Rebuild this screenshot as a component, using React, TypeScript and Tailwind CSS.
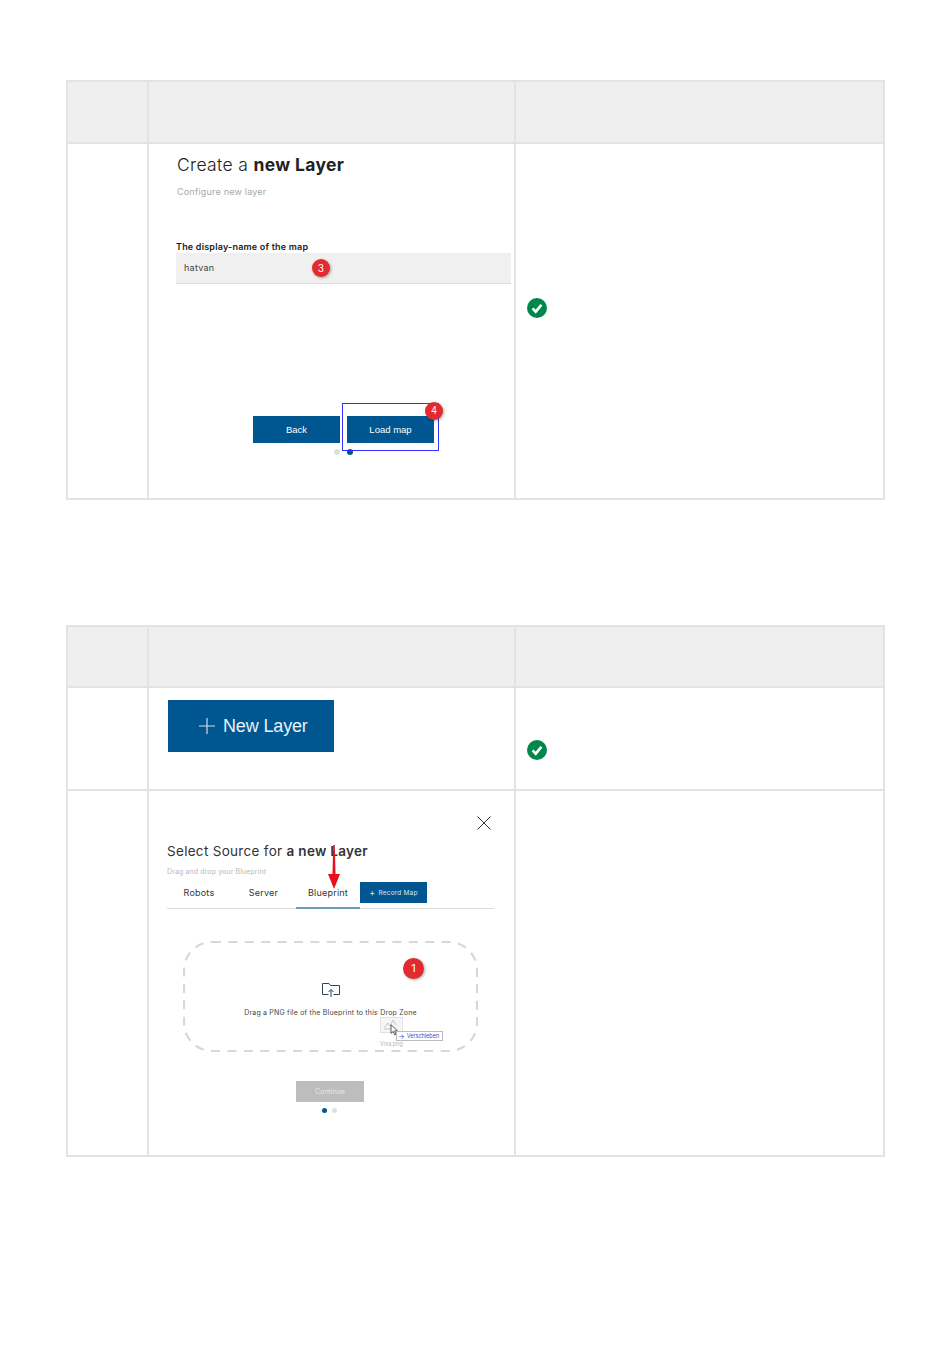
const LINE = "border-[#e3e3e3]";

function CheckBadge() {
  return (
    <svg width="20" height="20" viewBox="0 0 20 20" className="block">
      <circle cx="10" cy="10" r="10" fill="#00884a" />
      <path d="M5.6 10.4l3.1 3.3L14.4 6.8" fill="none" stroke="#fff" strokeWidth="2.6" />
    </svg>
  );
}

function NumberBadge({ n, className }: { n: number; className: string }) {
  return (
    <div className={`absolute flex h-[18px] w-[18px] items-center justify-center rounded-full bg-[#e32b2f] text-[10px] leading-none text-white shadow-[1px_1px_3px_rgba(0,0,0,0.35)] ${className}`}>
      {n}
    </div>
  );
}

function HeaderRow({ height }: { height: string }) {
  return (
    <>
      <div className={`bg-[#efefef] ${height}`} />
      <div className={`border-l-2 ${LINE} bg-[#efefef] ${height}`} />
      <div className={`border-l-2 ${LINE} bg-[#efefef] ${height}`} />
    </>
  );
}

function CreateLayerRow() {
  return (
    <>
      <div className={`h-[356px] border-t-2 ${LINE}`} />
      <div className={`h-[356px] border-t-2 border-l-2 ${LINE} pt-[10px] pl-[27px] pr-[3px]`}>
        <h2 className="pl-[1px] text-[17.5px] leading-[22px] font-light tracking-[0.35px] text-[#222]">
          Create a <span className="font-bold">new Layer</span>
        </h2>
        <p className="mt-[10px] pl-[1px] text-[9px] leading-[12px] tracking-[0.2px] text-[#a8a8a8]">Configure new layer</p>
        <p className="mt-[43px] text-[9px] leading-[12px] font-semibold tracking-[0.2px] text-[#222]">The display-name of the map</p>
        <div className="relative flex h-[31px] items-center border-b border-[#dcdcdc] bg-[#f0f0f0] pl-[8px] text-[9px] tracking-[0.25px] text-[#444]">
          hatvan
          <NumberBadge n={3} className="left-[136px] top-[6px]" />
        </div>
        <div className="relative mt-[132px] ml-[77px] flex gap-[7px] font-['Liberation_Sans',sans-serif] text-[9.5px] text-white">
          <div className="flex h-[27px] w-[87px] items-center justify-center bg-[#005691] pt-[1px]">Back</div>
          <div className="flex h-[27px] w-[87px] items-center justify-center bg-[#005691] pt-[1px]">Load map</div>
          <div className="absolute left-[89px] top-[-13px] h-[48px] w-[97px] border border-[#3232ff]" />
          <NumberBadge n={4} className="left-[172px] top-[-14px]" />
        </div>
        <div className="mt-[6px] ml-[158px] flex gap-[7px]">
          <div className="h-[6px] w-[6px] rounded-full bg-[#dfdfdf]" />
          <div className="h-[6px] w-[6px] rounded-full bg-[#005691]" />
        </div>
      </div>
      <div className={`h-[356px] border-t-2 border-l-2 ${LINE} pt-[154px] pl-[11px]`}>
        <CheckBadge />
      </div>
    </>
  );
}

function NewLayerRow() {
  return (
    <>
      <div className={`h-[103px] border-t-2 ${LINE}`} />
      <div className={`h-[103px] border-t-2 border-l-2 ${LINE} pt-[12px] pl-[19px]`}>
        <div className="flex h-[52px] w-[166px] items-center bg-[#005691] pl-[31px] font-['Liberation_Sans',sans-serif] text-[18px] tracking-[-0.15px] text-[#e8f2fa]">
          <svg width="16" height="16" viewBox="0 0 16 16" className="mr-[8px]">
            <path d="M8 0v16M0 8h16" stroke="#cfdde8" strokeWidth="1.2" />
          </svg>
          New Layer
        </div>
      </div>
      <div className={`h-[103px] border-t-2 border-l-2 ${LINE} pt-[52px] pl-[11px]`}>
        <CheckBadge />
      </div>
    </>
  );
}

function DropZone() {
  return (
    <div className="relative mt-[32px] ml-[16px] flex h-[111px] w-[295px] flex-col items-center pt-[42px]">
      <svg width="295" height="111" viewBox="0 0 295 111" className="absolute left-0 top-0">
        <rect x="1" y="1" width="293" height="109" rx="28" fill="none" stroke="#d8d8d8" strokeWidth="2.2" strokeDasharray="9 7.4" />
      </svg>
      <svg width="18" height="14" viewBox="0 0 18 14" className="block">
        <path d="M6.5 11.5H.5V.5H7l1.5 2h9v9h-6" fill="none" stroke="#32465a" strokeWidth="1" />
        <path d="M9 14V6.5M6.5 9L9 6.5 11.5 9" fill="none" stroke="#32465a" strokeWidth="1" />
      </svg>
      <p className="mt-[11px] text-[7px] leading-[10px] tracking-[0.2px] text-[#444]">Drag a PNG file of the Blueprint to this Drop Zone</p>
      <NumberBadge n={1} className="left-[220px] top-[17px] h-[21px]! w-[21px]! text-[11px]!" />
      <div className="absolute left-[197px] top-[76px] flex h-[16px] w-[23px] items-start justify-center border border-[#e2e2e2] bg-[#f6f6f6]">
        <svg width="17" height="12" viewBox="0 0 17 12">
          <path d="M1 10l4-5 2 3 3-6 3 5M1 11h9" fill="none" stroke="#b8b8b8" strokeWidth="0.8" />
        </svg>
      </div>
      <svg width="9" height="12" viewBox="0 0 9 12" className="absolute left-[207px] top-[83px]">
        <path d="M1 .8v8.6l2.2-2 1.5 3.4 1.4-.6-1.5-3.3h3z" fill="#fff" stroke="#333" strokeWidth="0.8" />
      </svg>
      <div className="absolute left-[213px] top-[90px] flex h-[10px] w-[47px] items-center border border-[#bbbbbb] bg-white pl-[1px] text-[5.5px] text-[#3b4fd0]">
        <span className="mr-[2px] text-[7px] leading-none">→</span>Verschieben
      </div>
      <span className="absolute left-[197px] top-[100px] text-[5.5px] leading-[7px] text-[#b5b5b5]">Vixa.png</span>
    </div>
  );
}

function SelectSourceRow() {
  return (
    <>
      <div className={`h-[366px] border-t-2 ${LINE}`} />
      <div className={`h-[366px] border-t-2 border-l-2 ${LINE} pt-[25px] pl-[18px]`}>
        <div className="relative w-[327px]">
          <div className="flex justify-end pr-[3px]">
            <svg width="14" height="14" viewBox="0 0 14 14" className="block">
              <path d="M.5.5l13 13M13.5.5l-13 13" stroke="#333" strokeWidth="1" />
            </svg>
          </div>
          <h3 className="mt-[12px] text-[13.5px] leading-[18px] tracking-[0.3px] text-[#333]">
            Select Source for <span className="font-semibold">a new Layer</span>
          </h3>
          <p className="mt-[7px] text-[7px] leading-[10px] tracking-[0.12px] text-[#b8b8b8]">Drag and drop your Blueprint</p>
          <div className="mt-[5px] flex h-[27px] border-b border-[#dcdcdc] text-[9px] leading-[12px] tracking-[0.2px] text-[#333]">
            <div className="h-[27px] w-[64px] pt-[5px] text-center">Robots</div>
            <div className="h-[27px] w-[65px] pt-[5px] text-center">Server</div>
            <div className="h-[27px] w-[64px] border-b-2 border-[#6b9cbf] pt-[5px] text-center">Blueprint</div>
            <div className="flex h-[21px] w-[67px] items-center justify-center bg-[#005691] text-[6.5px] text-[#dbe8f2]">
              <span className="mr-[3px] text-[9px] leading-none">+</span>Record Map
            </div>
          </div>
          <svg width="14" height="45" viewBox="0 0 14 45" className="absolute left-[160px] top-[29px]">
            <path d="M6.2 0h1.6l.8 32H5.4z" fill="#e8101a" />
            <path d="M1 29h12L7 44z" fill="#e8101a" />
          </svg>
          <DropZone />
          <div className="mt-[29px] ml-[129px] flex h-[21px] w-[68px] items-center justify-center bg-[#bdbdbd] pt-[2px] text-[7px] text-[#e8e8e8]">Continue</div>
          <div className="mt-[6px] ml-[155px] flex gap-[5px]">
            <div className="h-[5px] w-[5px] rounded-full bg-[#005691]" />
            <div className="h-[5px] w-[5px] rounded-full bg-[#dfdfdf]" />
          </div>
        </div>
      </div>
      <div className={`h-[366px] border-t-2 border-l-2 ${LINE}`} />
    </>
  );
}

export default function App() {
  return (
    <div className="h-[1369px] w-[950px] bg-white pt-[80px] pl-[66px] font-['Inter',sans-serif]">
      <div className={`grid w-[819px] grid-cols-[79px_367px_369px] border-2 ${LINE}`}>
        <HeaderRow height="h-[60px]" />
        <CreateLayerRow />
      </div>
      <div className={`mt-[125px] grid w-[819px] grid-cols-[79px_367px_369px] border-2 ${LINE}`}>
        <HeaderRow height="h-[59px]" />
        <NewLayerRow />
        <SelectSourceRow />
      </div>
    </div>
  );
}
